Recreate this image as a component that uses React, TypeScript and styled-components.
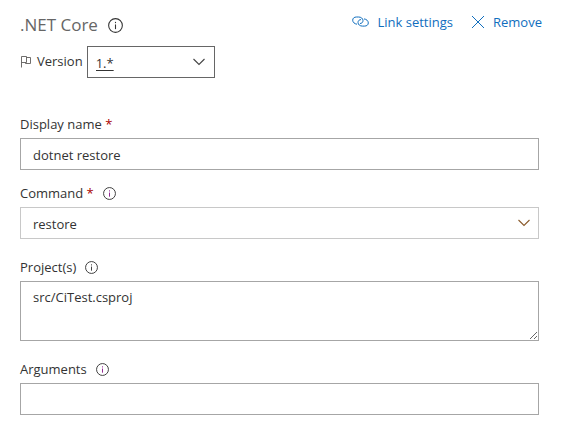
import React from "react";
import styled, { createGlobalStyle } from "styled-components";

const GlobalStyle = createGlobalStyle`
  *, *::before, *::after { box-sizing: border-box; }
  body {
    margin: 0;
    background: #fff;
    color: #333;
    font-family: "Segoe UI", "Open Sans", "Noto Sans", sans-serif;
    font-size: 13px;
    line-height: 20px;
  }
`;

const Page = styled.main`
  padding: 12px 22px 16px 20px;
`;

const Header = styled.header`
  display: flex;
  align-items: flex-start;
  justify-content: space-between;
  height: 34px;
  padding-right: 19px;
  margin-right: -22px;
`;

const TitleGroup = styled.div`
  display: flex;
  align-items: center;
  gap: 10px;
`;

const Title = styled.h1`
  margin: 0;
  font-size: 17px;
  font-weight: 400;
  line-height: 26px;
  color: #666;
`;

const Actions = styled.div`
  display: flex;
  gap: 18px;
`;

const ActionButton = styled.button`
  display: flex;
  align-items: center;
  gap: 8px;
  padding: 0;
  border: 0;
  background: none;
  color: #106ebe;
  font: inherit;
  cursor: pointer;
`;

const InfoButton = styled.button`
  display: flex;
  padding: 0;
  border: 0;
  background: none;
  color: #333;
  cursor: pointer;
`;

const VersionRow = styled.div`
  display: flex;
  align-items: center;
  gap: 4px;
  margin-bottom: 36px;
`;

const VersionLabel = styled.label`
  display: flex;
  align-items: center;
  gap: 5px;
  padding-bottom: 2px;
`;

const SelectBox = styled.div<{ $narrow?: boolean }>`
  position: relative;
  width: ${(p) => (p.$narrow ? "128px" : "100%")};
  color: ${(p) => (p.$narrow ? "#444" : "#8a5a2b")};

  svg {
    position: absolute;
    right: ${(p) => (p.$narrow ? "9px" : "8px")};
    top: 10px;
    pointer-events: none;
  }
`;

const Select = styled.select<{ $strong?: boolean }>`
  display: block;
  width: 100%;
  height: 32px;
  padding: 1px 32px 0 ${(p) => (p.$strong ? "8px" : "12px")};
  border: 1px solid ${(p) => (p.$strong ? "#666" : "#c8c8c8")};
  border-radius: 0;
  appearance: none;
  background: #fff;
  color: #333;
  font: inherit;
  text-decoration: ${(p) => (p.$strong ? "underline" : "none")};
  text-underline-offset: 2px;
`;

const Field = styled.div<{ $gap: number }>`
  margin-bottom: ${(p) => p.$gap}px;
`;

const LabelRow = styled.div`
  display: flex;
  align-items: center;
  gap: 9px;
  margin-bottom: 4px;
`;

const Required = styled.span`
  color: #a80000;
`;

const TextInput = styled.input`
  display: block;
  width: 100%;
  height: 32px;
  padding: 1px 12px 0;
  border: 1px solid #a6a6a6;
  border-radius: 0;
  background: #fff;
  color: #333;
  font: inherit;
`;

const TextArea = styled.textarea`
  display: block;
  width: 100%;
  height: 60px;
  padding: 5px 12px;
  border: 1px solid #a6a6a6;
  border-radius: 0;
  background: #fff;
  color: #333;
  font: inherit;
  resize: both;
`;

function Info({ label, size = 13, color = "#333" }: { label: string; size?: number; color?: string }) {
  return (
    <InfoButton type="button" aria-label={`About ${label}`}>
      <svg width={size} height={size} viewBox="0 0 14 14" fill="none" stroke="currentColor">
        <circle cx="7" cy="7" r="6.4" />
        <path d="M7 6v4.4" stroke={color} />
        <path d="M7 3.6v1.2" stroke={color} />
      </svg>
    </InfoButton>
  );
}

function Chevron() {
  return (
    <svg width="14" height="12" viewBox="0 0 14 12" fill="none" stroke="currentColor" strokeWidth="1.1">
      <path d="M1.5 3 7 8.5 12.5 3" />
    </svg>
  );
}

function FlagIcon() {
  return (
    <svg width="12" height="13" viewBox="0 0 12 13" fill="none" stroke="#605e5c">
      <path d="M1.5 12.5V1.5H6.5V7.5H1.500M6.5 2.5H10.5V8.5H5.5V7.5" strokeWidth="0.9" />
    </svg>
  );
}

function LinkIcon() {
  return (
    <svg width="17" height="12" viewBox="0 0 17 12" fill="none" stroke="currentColor">
      <path d="M5 8.200C2.600 7.900.7 6.300.7 4.200.7 2.200 2.300 1 4.400 1h2.200c2.300 0 4.400 1.400 4.400 3.600 0 1.800-1.300 2.900-3 2.900" />
      <path d="M12 2.900c2.400.3 4.300 1.900 4.300 4 0 2-1.600 3.200-3.700 3.200h-2.200C8.100 10.100 6 8.700 6 6.500c0-1.800 1.300-2.900 3-2.900" />
    </svg>
  );
}

function CloseIcon() {
  return (
    <svg width="14" height="14" viewBox="0 0 14 14" fill="none" stroke="currentColor">
      <path d="M1 1 13 13M13 1 1 13" />
    </svg>
  );
}

export default function App() {
  return (
    <>
      <GlobalStyle />
      <Page>
        <Header>
          <TitleGroup>
            <Title>.NET Core</Title>
            <Info label=".NET Core" size={15} />
          </TitleGroup>
          <Actions>
            <ActionButton type="button">
              <LinkIcon />
              Link settings
            </ActionButton>
            <ActionButton type="button">
              <CloseIcon />
              Remove
            </ActionButton>
          </Actions>
        </Header>

        <VersionRow>
          <VersionLabel htmlFor="version">
            <FlagIcon />
            Version
          </VersionLabel>
          <SelectBox $narrow>
            <Select id="version" $strong defaultValue="1.*">
              <option>1.*</option>
            </Select>
            <Chevron />
          </SelectBox>
        </VersionRow>

        <Field $gap={13}>
          <LabelRow>
            <label htmlFor="display-name">
              Display name <Required>*</Required>
            </label>
          </LabelRow>
          <TextInput id="display-name" defaultValue="dotnet restore" required />
        </Field>

        <Field $gap={18}>
          <LabelRow>
            <label htmlFor="command">
              Command <Required>*</Required>
            </label>
            <Info label="Command" color="#8a1a8a" />
          </LabelRow>
          <SelectBox>
            <Select id="command" defaultValue="restore" required>
              <option>restore</option>
            </Select>
            <Chevron />
          </SelectBox>
        </Field>

        <Field $gap={18}>
          <LabelRow>
            <label htmlFor="projects">Project(s)</label>
            <Info label="Project(s)" />
          </LabelRow>
          <TextArea id="projects" defaultValue="src/CiTest.csproj" spellCheck={false} />
        </Field>

        <Field $gap={0}>
          <LabelRow>
            <label htmlFor="arguments">Arguments</label>
            <Info label="Arguments" color="#8a1a8a" />
          </LabelRow>
          <TextInput id="arguments" />
        </Field>
      </Page>
    </>
  );
}
